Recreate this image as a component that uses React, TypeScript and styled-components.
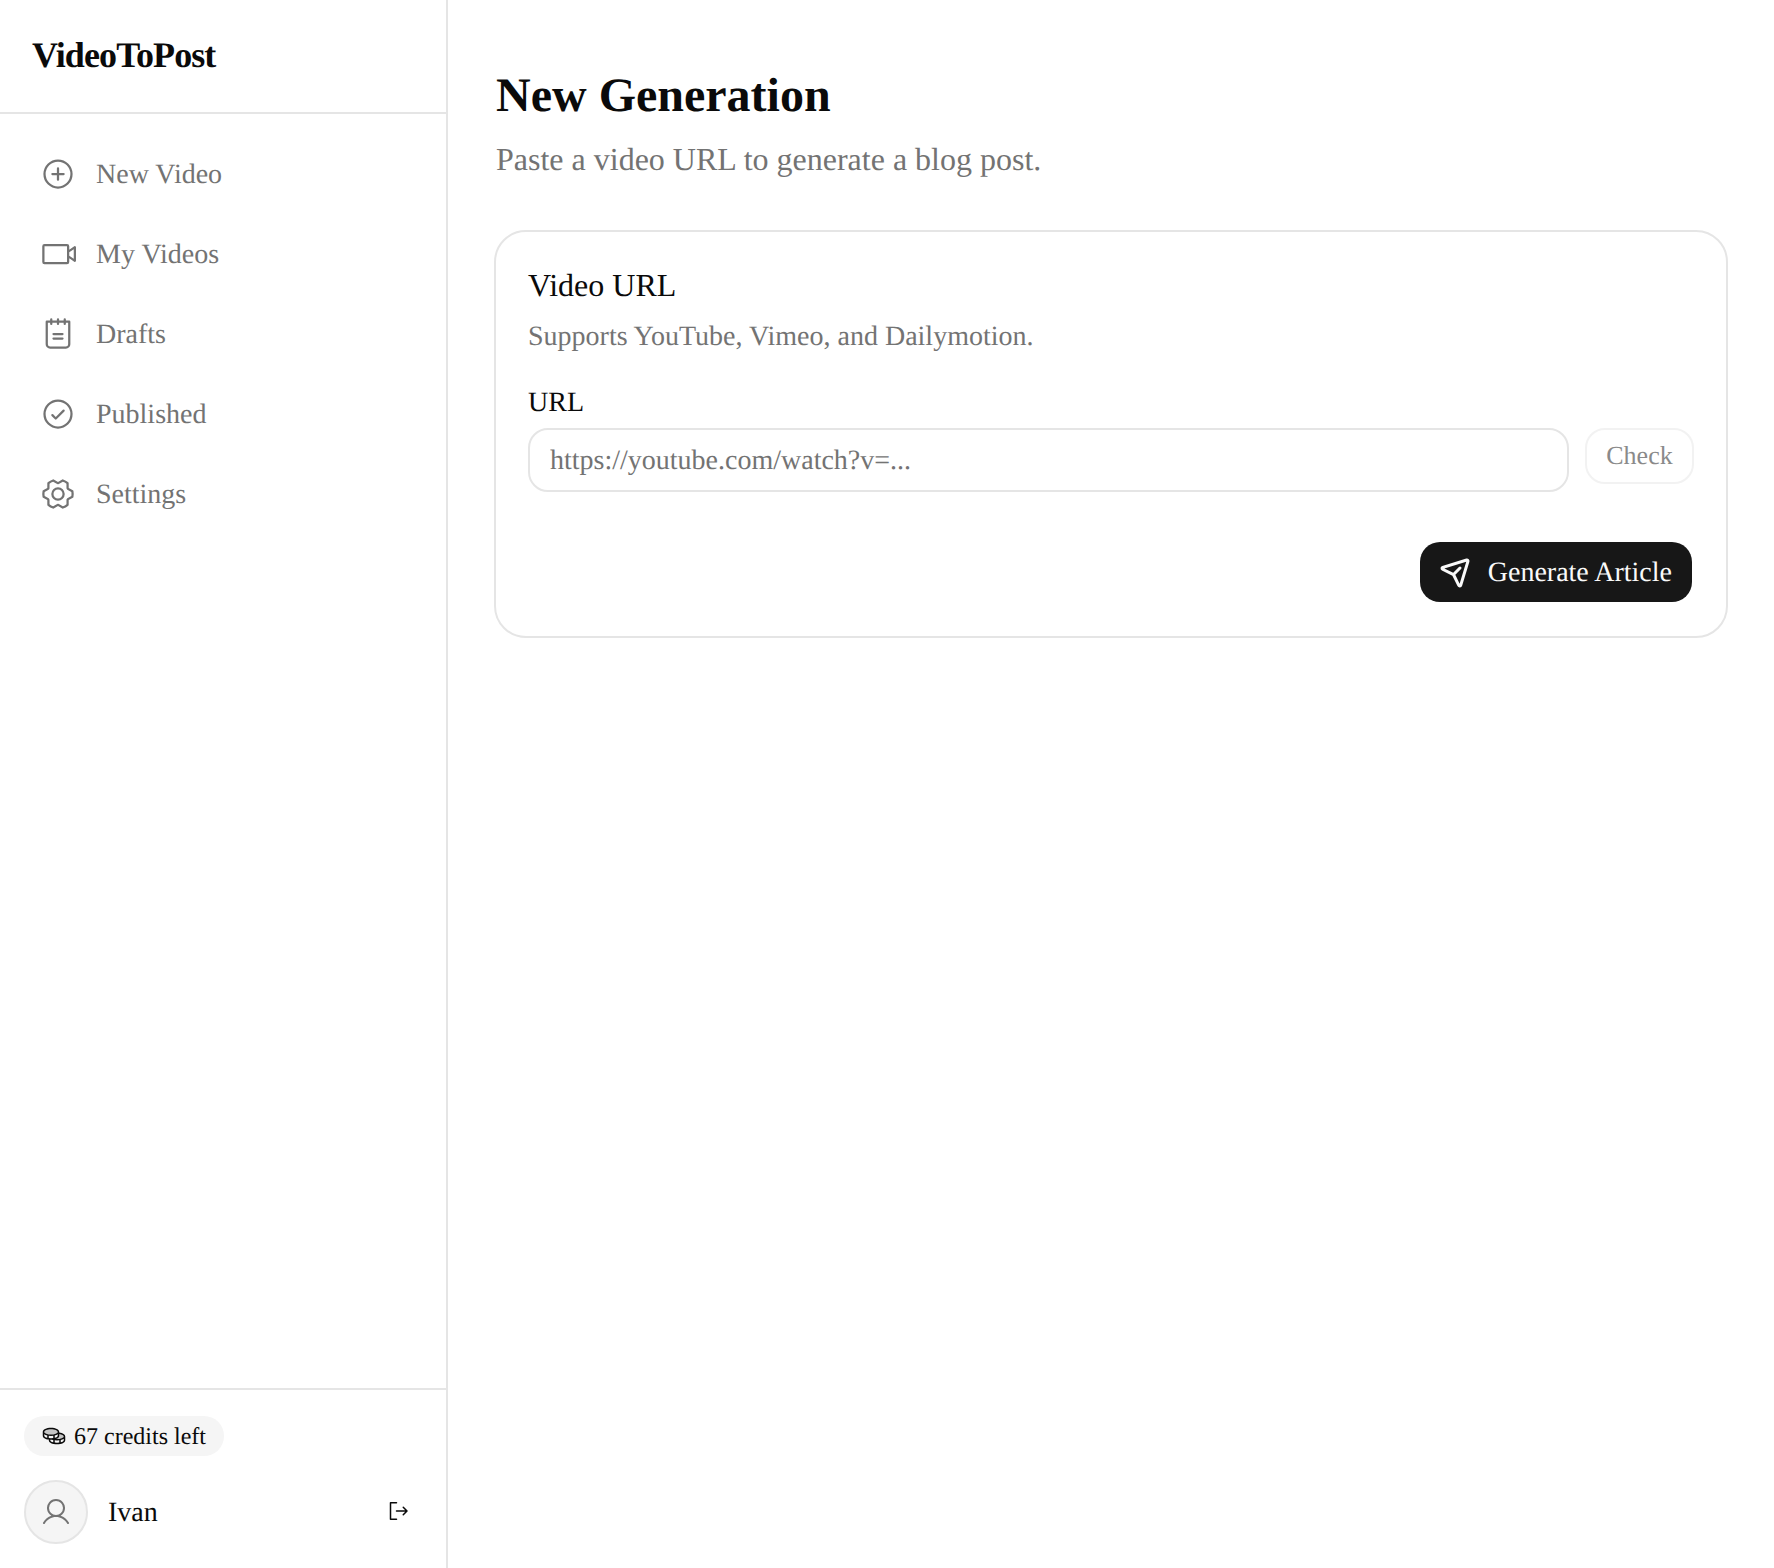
import React from "react";
import styled, { createGlobalStyle } from "styled-components";
import {
  PiPlusCircle,
  PiVideoCamera,
  PiNotepad,
  PiCheckCircle,
  PiGearSix,
  PiCoinsDuotone,
  PiUser,
  PiSignOut,
  PiPaperPlaneTiltBold,
} from "react-icons/pi";

const GlobalStyle = createGlobalStyle`
  * { box-sizing: border-box; }
  html, body { margin: 0; padding: 0; background: #fff; }
  body {
    font-family: "Liberation Serif", "Times New Roman", serif;
    color: #0a0a0a;
    text-rendering: geometricPrecision;
  }
`;

const Page = styled.div`
  display: flex;
  width: 1774px;
  height: 1568px;
  overflow: hidden;
`;

const Sidebar = styled.aside`
  width: 448px;
  flex-shrink: 0;
  display: flex;
  flex-direction: column;
  border-right: 2px solid #e5e5e5;
`;

const Brand = styled.div`
  height: 114px;
  padding: 0 32px 3px;
  display: flex;
  align-items: center;
  border-bottom: 2px solid #e5e5e5;
`;

const Logo = styled.span`
  font-size: 36px;
  font-weight: 700;
  letter-spacing: -0.9px;
`;

const Nav = styled.nav`
  flex: 1;
  display: flex;
  flex-direction: column;
  gap: 8px;
  padding: 24px 24px;
`;

const NavItem = styled.a`
  height: 72px;
  display: flex;
  align-items: center;
  gap: 20px;
  padding-left: 16px;
  color: #737373;
  font-size: 28px;
  svg {
    width: 36px;
    height: 36px;
    flex-shrink: 0;
  }
`;

const NudgedText = styled.span`
  padding-top: 2px;
`;

const Footer = styled.div`
  border-top: 2px solid #e5e5e5;
  padding: 26px 24px 24px;
  display: flex;
  flex-direction: column;
  align-items: flex-start;
  gap: 24px;
`;

const Credits = styled.div`
  height: 40px;
  padding: 0 18px;
  display: flex;
  align-items: center;
  gap: 8px;
  background: #f5f5f5;
  border-radius: 20px;
  font-size: 24px;
  svg {
    width: 24px;
    height: 24px;
  }
`;

const UserRow = styled.div`
  width: 100%;
  display: flex;
  align-items: center;
  gap: 20px;
`;

const Avatar = styled.div`
  width: 64px;
  height: 64px;
  flex-shrink: 0;
  border-radius: 50%;
  border: 2px solid #e5e5e5;
  background: #f5f5f5;
  color: #737373;
  display: flex;
  align-items: center;
  justify-content: center;
  svg {
    width: 32px;
    height: 32px;
  }
`;

const UserName = styled.span`
  flex: 1;
  padding-top: 2px;
  font-size: 28px;
`;

const LogoutButton = styled.button`
  border: 0;
  background: none;
  padding: 0;
  margin: 0 12px 2px 0;
  display: flex;
  color: #0a0a0a;
  svg {
    width: 24px;
    height: 24px;
  }
`;

const Main = styled.main`
  flex: 1;
  padding: 68px 46px 0;
`;

const Title = styled.h1`
  margin: 0 0 0 2px;
  font-size: 48px;
  line-height: 56px;
  font-weight: 700;
`;

const Subtitle = styled.p`
  margin: 17px 0 0 2px;
  font-size: 32px;
  line-height: 36px;
  color: #737373;
`;

const Card = styled.section`
  margin-top: 53px;
  height: 408px;
  border: 2px solid #e5e5e5;
  border-radius: 32px;
  padding: 32px;
`;

const CardTitle = styled.h2`
  margin: 3px 0 0;
  font-size: 32px;
  line-height: 36px;
  font-weight: 400;
`;

const CardText = styled.p`
  margin: 16px 0 0;
  font-size: 28px;
  line-height: 36px;
  color: #737373;
`;

const FieldLabel = styled.label`
  display: block;
  margin-top: 32px;
  font-size: 28px;
  line-height: 32px;
`;

const FieldRow = styled.div`
  margin-top: 9px;
  display: flex;
  align-items: flex-start;
  gap: 16px;
`;

const UrlInput = styled.input`
  flex: 1;
  height: 64px;
  padding: 2px 20px 0;
  border: 2px solid #e5e5e5;
  border-radius: 20px;
  background: #fff;
  font-family: inherit;
  font-size: 28px;
  color: #0a0a0a;
  text-rendering: geometricPrecision;
  &::placeholder {
    color: #737373;
    opacity: 1;
  }
`;

const CheckButton = styled.button`
  width: 109px;
  height: 56px;
  border: 2px solid #f2f2f2;
  border-radius: 20px;
  background: #fff;
  font-family: inherit;
  font-size: 26px;
  color: #8a8a8a;
  padding: 0;
  text-rendering: geometricPrecision;
`;

const Actions = styled.div`
  margin-top: 50px;
  display: flex;
  justify-content: flex-end;
  padding-right: 2px;
`;

const PrimaryButton = styled.button`
  height: 60px;
  padding: 0 20px;
  display: flex;
  align-items: center;
  gap: 16px;
  border: 0;
  border-radius: 20px;
  background: #171717;
  color: #fafafa;
  font-family: inherit;
  font-size: 28px;
  text-rendering: geometricPrecision;
  svg {
    width: 32px;
    height: 32px;
  }
`;

const navItems = [
  { label: "New Video", icon: <PiPlusCircle /> },
  { label: "My Videos", icon: <PiVideoCamera /> },
  { label: "Drafts", icon: <PiNotepad /> },
  { label: "Published", icon: <PiCheckCircle /> },
  { label: "Settings", icon: <PiGearSix /> },
];

export default function App() {
  return (
    <Page>
      <GlobalStyle />
      <Sidebar>
        <Brand>
          <Logo>VideoToPost</Logo>
        </Brand>
        <Nav>
          {navItems.map((item) => (
            <NavItem key={item.label}>
              {item.icon}
              <NudgedText>{item.label}</NudgedText>
            </NavItem>
          ))}
        </Nav>
        <Footer>
          <Credits>
            <PiCoinsDuotone />
            <NudgedText>67 credits left</NudgedText>
          </Credits>
          <UserRow>
            <Avatar>
              <PiUser />
            </Avatar>
            <UserName>Ivan</UserName>
            <LogoutButton>
              <PiSignOut />
            </LogoutButton>
          </UserRow>
        </Footer>
      </Sidebar>
      <Main>
        <Title>New Generation</Title>
        <Subtitle>Paste a video URL to generate a blog post.</Subtitle>
        <Card>
          <CardTitle>Video URL</CardTitle>
          <CardText>Supports YouTube, Vimeo, and Dailymotion.</CardText>
          <FieldLabel>URL</FieldLabel>
          <FieldRow>
            <UrlInput placeholder="https://youtube.com/watch?v=..." />
            <CheckButton>Check</CheckButton>
          </FieldRow>
          <Actions>
            <PrimaryButton>
              <PiPaperPlaneTiltBold />
              <NudgedText>Generate Article</NudgedText>
            </PrimaryButton>
          </Actions>
        </Card>
      </Main>
    </Page>
  );
}
